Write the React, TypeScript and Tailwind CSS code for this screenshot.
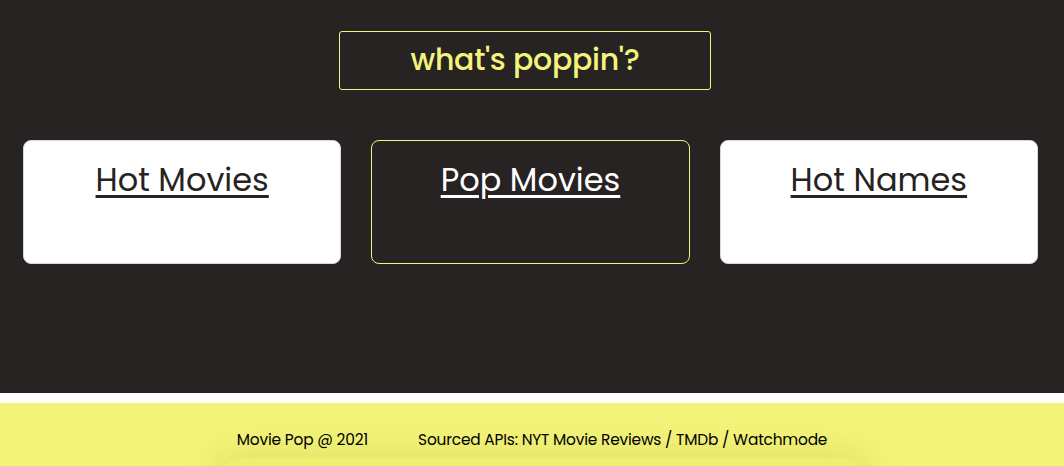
import React from 'react';

const font = { fontFamily: '"Poppins", "Inter", "Open Sans", sans-serif' };

function Card({ label, dark }: { label: string; dark?: boolean }) {
  return (
    <div
      className={
        dark
          ? 'h-[124px] rounded-lg border border-[#f4f47a] bg-[#272323] flex justify-center'
          : 'h-[124px] rounded-lg border border-[#d8d8d8] bg-white flex justify-center'
      }
    >
      <a
        href="#"
        className={
          dark
            ? 'mt-[19px] text-[32px] leading-[40px] underline underline-offset-[4px] decoration-[2.5px] text-white'
            : 'mt-[19px] text-[32px] leading-[40px] underline underline-offset-[4px] decoration-[2.5px] text-[#272323]'
        }
      >
        {label}
      </a>
    </div>
  );
}

export default function App() {
  return (
    <div className="w-[1064px] h-[466px] overflow-hidden bg-white flex flex-col" style={font}>
      {/* Main */}
      <main className="h-[393px] bg-[#272323] flex flex-col items-center pt-[31px]">
        <div className="w-[372px] h-[59px] mr-[14px] border border-[#f4f47a] rounded-[3px] flex items-center justify-center">
          <h1 className="text-[30px] font-medium text-[#f4f47a] leading-none -mt-[1px] tracking-[-0.3px]">what's poppin'?</h1>
        </div>
        <section className="w-full grid grid-cols-3 gap-[30px] pl-[23px] pr-[26px] mt-[50px]">
          <Card label="Hot Movies" />
          <Card label="Pop Movies" dark />
          <Card label="Hot Names" />
        </section>
      </main>

      {/* Footer */}
      <footer className="mt-[10px] flex-1 bg-[#f4f47a] relative overflow-hidden">
        <div className="absolute left-[220px] right-[200px] top-[55px] h-[40px] rounded-full shadow-[0_0_30px_10px_rgba(200,200,80,0.35)] bg-[#eeee70]"></div>
        <div className="relative flex justify-center gap-[50px] pt-[25px] text-[15.4px] text-black tracking-[-0.2px]">
          <span>Movie Pop @ 2021</span>
          <span>Sourced APIs: NYT Movie Reviews / TMDb / Watchmode</span>
        </div>
      </footer>
    </div>
  );
}
